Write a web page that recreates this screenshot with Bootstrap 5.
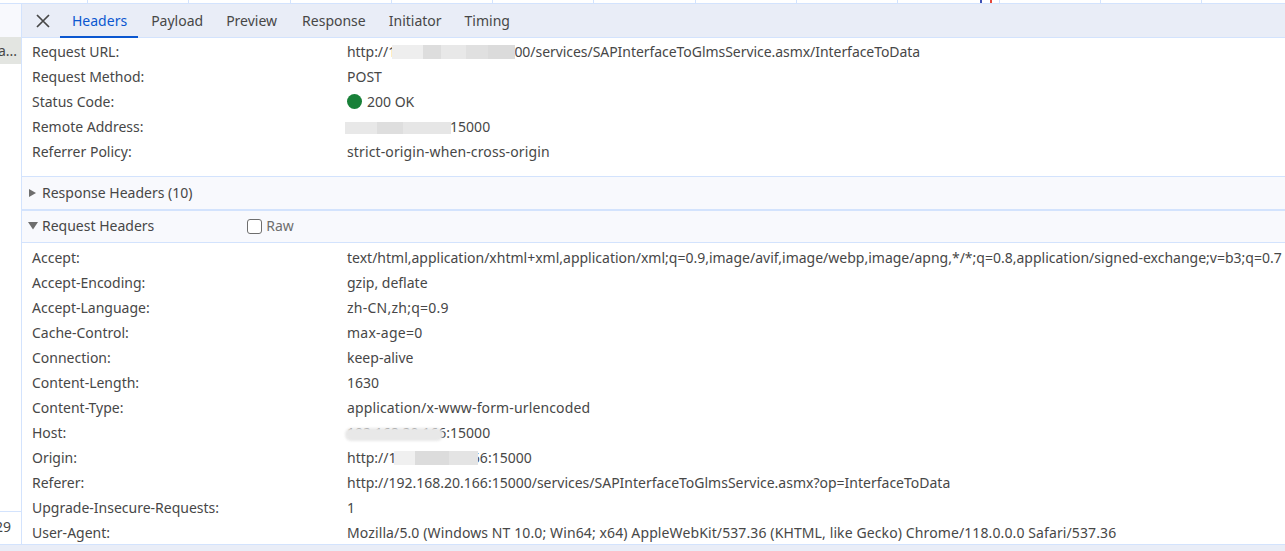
<!DOCTYPE html>
<html><head><meta charset="utf-8">
<link rel="stylesheet" href="https://cdn.jsdelivr.net/npm/bootstrap@5.3.0/dist/css/bootstrap.min.css">
<style>
html,body{height:551px;overflow:hidden;background:#fff}
body{font-family:"Noto Sans","Open Sans",sans-serif;font-size:14px;color:#474747;line-height:25px}
.topstrip{height:4px;border-bottom:1px solid #d3e3fd;background:#fff;padding-left:87px}
.tick{width:1px;background:#d3e3fd;flex:0 0 1px;margin-right:100.3px}
.tickpair{width:12px;flex:0 0 12px;margin-left:-19px;margin-right:7px;border-left:2px solid #3f51b5;border-right:2px solid #e5483b}
.mainrow{height:540px}
.sidecol{width:22px;flex:0 0 22px;border-right:1px solid #d3e3fd;overflow:hidden;white-space:nowrap}
.sidehead{height:33px;background:#f8f9fd}
.siderow{height:27px;background:#e3e5e1;margin-left:-2px;width:23px;line-height:27px}
.sidegap{height:448px;border-bottom:1px solid #d3e3fd}
.sidenum{margin-left:-5px;line-height:30px}
.tabbar{height:34px;background:#e9edf7;border-bottom:1px solid #d3e3fd;padding-left:14px}
.tabx{width:17px;margin-right:7px}
.tabitem{margin-right:23px;height:33px;line-height:33px;color:#474747;white-space:nowrap;text-decoration:none}
.tabon{color:#0b57d0;border-bottom:2px solid #0b57d0;padding:0 11px 0 12px;margin-right:13px;height:34px}
.tabwide{margin-right:25px}
.kv{height:25px;padding-left:10px;white-space:nowrap;position:relative}
.kk{width:315px;flex:0 0 315px}
.blockone{padding-top:1px;height:138px;flex:0 0 auto}
.sechead{height:33px;background:#f8f9fd;border-top:1px solid #d3e3fd;padding:0 0 0 6px;color:#474747;white-space:nowrap}
.secsecond{border-top-width:2px;height:34px;border-bottom:1px solid #d3e3fd;padding-bottom:2px}
.tri{width:14px;flex:0 0 14px}
.rawlabel{margin-left:93px;color:#6e6e6e}
.rawbox{width:15px;height:15px;border:1.5px solid #6e6e6e;border-radius:3px;margin:2px 4px 0 0;background:#fff}
.dot{width:15px;height:15px;border-radius:50%;background:#188038;margin-right:5px}
.smear{position:absolute;filter:blur(.6px)}
.smear-url{left:370px;width:123px;top:6px;height:14px;background:linear-gradient(90deg,#eeeeee 0 25%,#dddddd 25% 40%,#e8e8e8 40% 60%,#e0e0e0 60% 78%,#dbdbdb 78% 100%)}
.smear-remote{left:323px;width:106px;top:8px;height:12px;background:linear-gradient(90deg,#e8e8e8 0 30%,#dedede 30% 55%,#e6e6e6 55% 100%)}
.smear-host{left:323px;width:98px;top:8px;height:13px;border-radius:6px;filter:blur(1.2px);background:#e8e8e8}
.smear-origin{left:372px;width:84px;top:6px;height:14px;background:linear-gradient(90deg,#f0f0f0 0 25%,#dcdcdc 25% 65%,#e4e4e4 65% 100%)}
.footbar{height:7px;background:#e9edf7;border-top:1px solid #d3e3fd}
.panel{overflow:hidden;min-width:0}
.blocktwo{padding-top:2px;overflow:hidden}
.trk-n{letter-spacing:-.05px}
.trk-s{letter-spacing:.13px}
.trk-u{letter-spacing:.11px}
.trk-w{letter-spacing:.25px}
</style></head>
<body>
<div class="topstrip d-flex">
<span class="tick"></span><span class="tick"></span><span class="tick"></span><span class="tick"></span><span class="tick"></span><span class="tick"></span><span class="tick"></span><span class="tick"></span><span class="tick"></span><span class="tickpair"></span><span class="tick"></span><span class="tick"></span><span class="tick"></span>
</div>
<div class="mainrow d-flex">
<div class="sidecol">
<div class="sidehead"></div>
<div class="siderow">a...</div>
<div class="sidegap"></div>
<div class="sidenum">29</div>
</div>
<div class="panel flex-grow-1 d-flex flex-column">
<div class="tabbar d-flex align-items-start flex-shrink-0">
<div class="tabx d-flex align-self-center"><svg width="14" height="14" viewBox="0 0 14 14"><path d="M1 1L13 13M13 1L1 13" stroke="#474747" stroke-width="1.7" fill="none"/></svg></div>
<a class="tabitem tabon" href="#">Headers</a>
<a class="tabitem" href="#">Payload</a>
<a class="tabitem tabwide" href="#">Preview</a>
<a class="tabitem" href="#">Response</a>
<a class="tabitem" href="#">Initiator</a>
<a class="tabitem" href="#">Timing</a>
</div>
<div class="blockone">
<div class="kv d-flex"><div class="kk">Request URL:</div><div class="trk-n">http://192.168.20.166:15000/services/SAPInterfaceToGlmsService.asmx/InterfaceToData</div><span class="smear smear-url"></span></div>
<div class="kv d-flex"><div class="kk">Request Method:</div><div>POST</div></div>
<div class="kv d-flex"><div class="kk">Status Code:</div><div class="d-flex align-items-center"><span class="dot"></span>200 OK</div></div>
<div class="kv d-flex"><div class="kk">Remote Address:</div><div>192.168.20.166:15000</div><span class="smear smear-remote"></span></div>
<div class="kv d-flex"><div class="kk">Referrer Policy:</div><div class="trk-s">strict-origin-when-cross-origin</div></div>
</div>
<div class="sechead d-flex align-items-center"><span class="tri d-flex"><svg width="9" height="10" viewBox="0 0 9 10"><path d="M1 1L8 5L1 9Z" fill="#6e6e6e"/></svg></span>Response Headers (10)</div>
<div class="sechead secsecond d-flex align-items-center"><span class="tri d-flex"><svg width="10" height="9" viewBox="0 0 10 9"><path d="M0 1H10L5 8.500Z" fill="#6e6e6e"/></svg></span>Request Headers<span class="rawlabel d-flex align-items-center"><span class="rawbox"></span>Raw</span></div>
<div class="blocktwo flex-grow-1">
<div class="kv d-flex"><div class="kk">Accept:</div><div>text/html,application/xhtml+xml,application/xml;q=0.9,image/avif,image/webp,image/apng,*/*;q=0.8,application/signed-exchange;v=b3;q=0.7</div></div>
<div class="kv d-flex"><div class="kk">Accept-Encoding:</div><div>gzip, deflate</div></div>
<div class="kv d-flex"><div class="kk">Accept-Language:</div><div class="trk-w">zh-CN,zh;q=0.9</div></div>
<div class="kv d-flex"><div class="kk">Cache-Control:</div><div class="trk-w">max-age=0</div></div>
<div class="kv d-flex"><div class="kk">Connection:</div><div>keep-alive</div></div>
<div class="kv d-flex"><div class="kk">Content-Length:</div><div>1630</div></div>
<div class="kv d-flex"><div class="kk">Content-Type:</div><div class="trk-s">application/x-www-form-urlencoded</div></div>
<div class="kv d-flex"><div class="kk">Host:</div><div>192.168.20.166:15000</div><span class="smear smear-host"></span></div>
<div class="kv d-flex"><div class="kk">Origin:</div><div>http://192.168.20.166:15000</div><span class="smear smear-origin"></span></div>
<div class="kv d-flex"><div class="kk">Referer:</div><div>http://192.168.20.166:15000/services/SAPInterfaceToGlmsService.asmx?op=InterfaceToData</div></div>
<div class="kv d-flex"><div class="kk">Upgrade-Insecure-Requests:</div><div>1</div></div>
<div class="kv d-flex"><div class="kk">User-Agent:</div><div class="trk-u">Mozilla/5.0 (Windows NT 10.0; Win64; x64) AppleWebKit/537.36 (KHTML, like Gecko) Chrome/118.0.0.0 Safari/537.36</div></div>
</div>
</div>
</div>
<div class="footbar"></div>
<script src="https://cdn.jsdelivr.net/npm/bootstrap@5.3.0/dist/js/bootstrap.bundle.min.js"></script>
</body></html>
